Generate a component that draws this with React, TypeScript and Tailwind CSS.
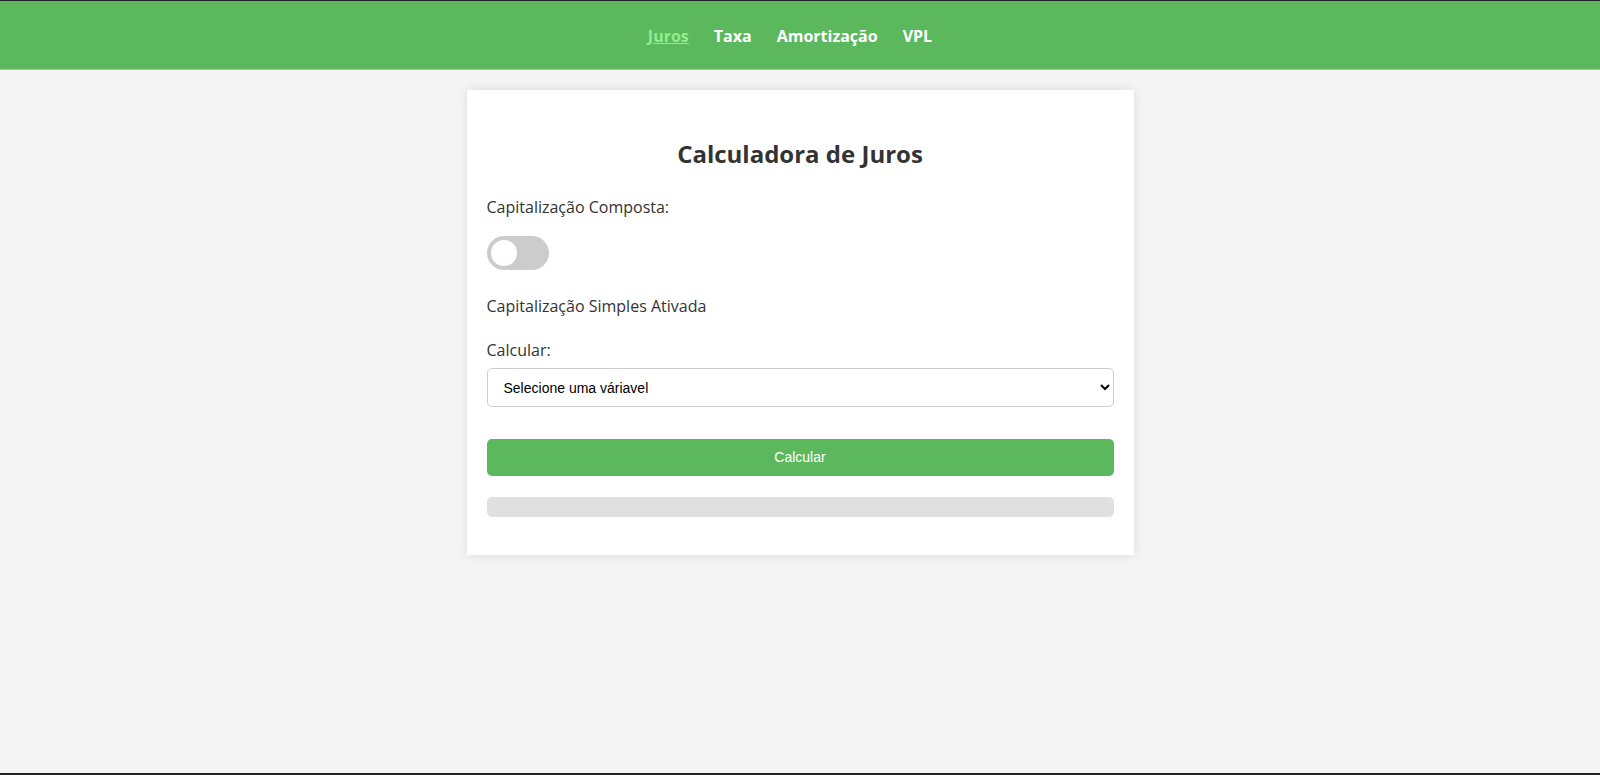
import React from "react";

export default function App() {
  return (
    <div className="h-[775px] bg-[#f4f4f4] border-t border-b-2 border-[#222] overflow-hidden" style={{ fontFamily: '"Open Sans", "Noto Sans", sans-serif' }}>
      <header className="h-[69px] bg-[#5cb85c] border-b border-[#8fd88f] flex items-center justify-center">
        <nav className="flex items-center pl-[5px] pt-[2px] text-[16px] font-bold text-white leading-none">
          <a href="#" className="mr-[25px] text-[#90ee90] underline">Juros</a>
          <a href="#" className="mr-[25px]">Taxa</a>
          <a href="#" className="mr-[25px]">Amortização</a>
          <a href="#" className="mr-[25px]">VPL</a>
        </nav>
      </header>
      <main className="flex justify-center pt-[20px]">
        <div className="w-[667px] bg-white px-[20px] pt-[20px] pb-[38px] shadow-[0_0_10px_rgba(0,0,0,0.1)] text-[#333]">
          <h2 className="mt-[28px] text-center text-[24px] leading-[32px] font-bold text-[#333]">Calculadora de Juros</h2>
          <div className="mt-[25px] text-[16px] leading-[24px]">Capitalização Composta:</div>
          <div className="mt-[17px] w-[62px] h-[34px] rounded-full bg-[#ccc] relative">
            <div className="absolute left-[4px] top-[4px] w-[26px] h-[26px] rounded-full bg-white"></div>
          </div>
          <div className="mt-[24px] text-[16px] leading-[24px]">Capitalização Simples Ativada</div>
          <div className="mt-[20px] text-[16px] leading-[24px]">Calcular:</div>
          <select
            className="mt-[6px] block w-full h-[39px] border border-[#ccc] rounded-[5px] pl-[12px] pr-[8px] text-[14px] text-black bg-white"
            style={{ fontFamily: '"Liberation Sans", Arial, sans-serif' }}
            defaultValue=""
          >
            <option value="">Selecione uma váriavel</option>
          </select>
          <button
            className="mt-[32px] block w-full h-[37px] rounded-[5px] bg-[#5cb85c] text-white text-[14px]"
            style={{ fontFamily: '"Liberation Sans", Arial, sans-serif' }}
          >
            Calcular
          </button>
          <div className="mt-[21px] h-[20px] rounded-[5px] bg-[#e0e0e0]"></div>
        </div>
      </main>
    </div>
  );
}
